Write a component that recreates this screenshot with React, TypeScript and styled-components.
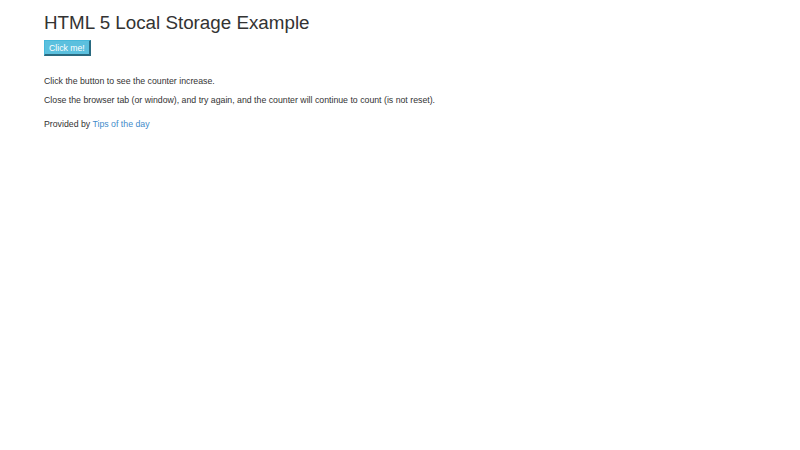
import React from "react";
import styled, { createGlobalStyle } from "styled-components";

const Global = createGlobalStyle`
  html, body { margin: 0; padding: 0; background: #fff; }
  body { font-family: "Liberation Sans", Arial, sans-serif; color: #333; }
`;

const Page = styled.div`
  padding: 12px 44px;
`;

const Title = styled.h1`
  margin: 0 0 6px;
  font-size: 18.8px;
  font-weight: 400;
  line-height: 22px;
  color: #333;
`;

const Button = styled.button`
  display: block;
  font-family: "Liberation Sans", Arial, sans-serif;
  font-size: 8.7px;
  line-height: 11px;
  color: #fff;
  background: #5bc0de;
  border: 1px solid #46b8da;
  border-right: 2px solid #2a6a80;
  border-bottom: 2px solid #2a6a80;
  padding: 2px 4px 0;
  margin: 0 0 20px;
`;

const Para = styled.p`
  margin: 0 0 8px;
  font-size: 8.75px;
  line-height: 11px;
`;

const Credit = styled(Para)`
  margin-top: 13px;
`;

const Link = styled.a`
  color: #428bca;
  text-decoration: none;
`;

export default function App() {
  return (
    <>
      <Global />
      <Page>
        <Title>HTML 5 Local Storage Example</Title>
        <Button>Click me!</Button>
        <Para>Click the button to see the counter increase.</Para>
        <Para>Close the browser tab (or window), and try again, and the counter will continue to count (is not reset).</Para>
        <Credit>Provided by <Link href="#">Tips of the day</Link></Credit>
      </Page>
    </>
  );
}
